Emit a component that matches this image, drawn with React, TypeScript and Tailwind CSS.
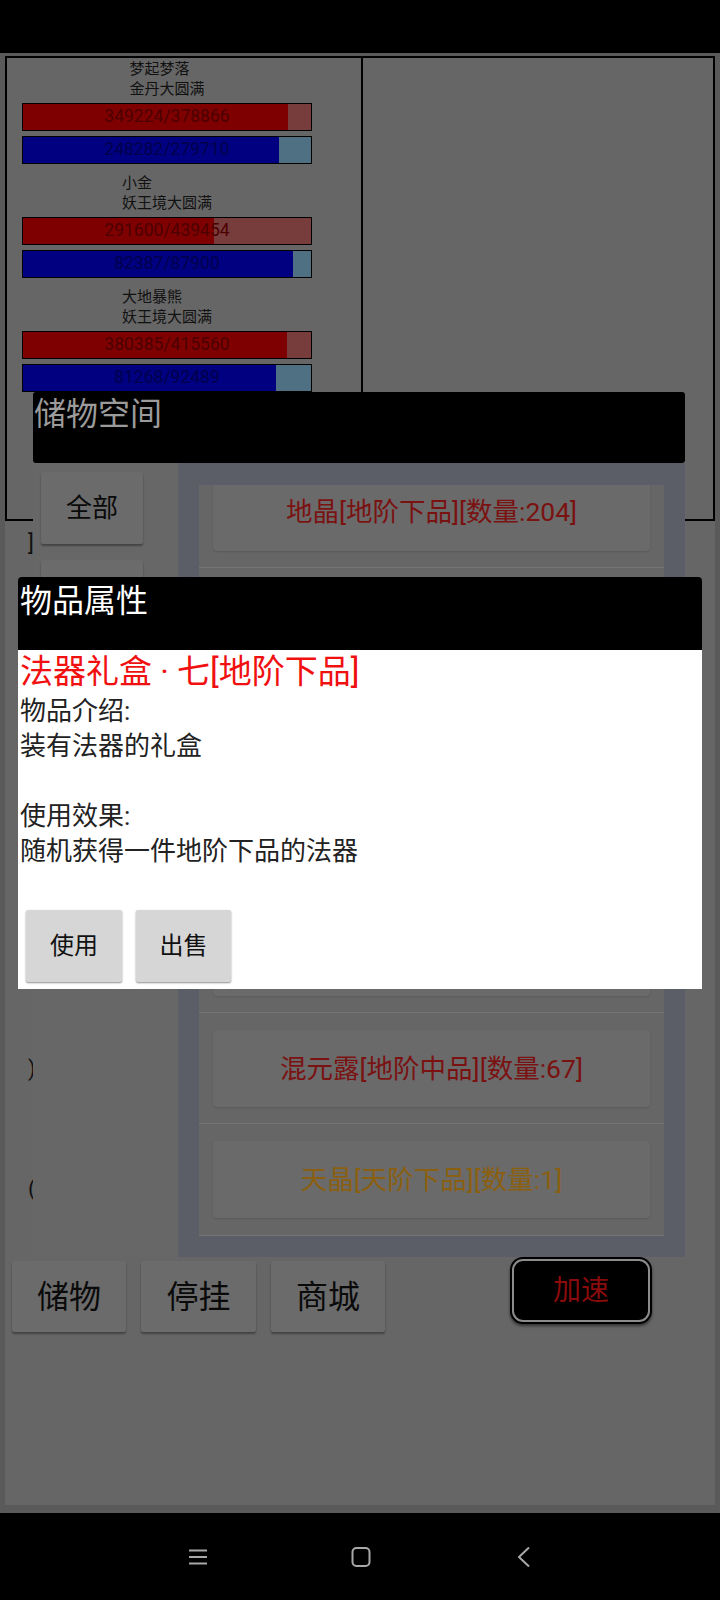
import React from "react";

const ff = "font-[family-name:Roboto,'Noto_Sans_CJK_SC',sans-serif]";

type Unit = { name: string; realm: string; hp: [number, number]; mp: [number, number] };

const units: Unit[] = [
  { name: "梦起梦落", realm: "金丹大圆满", hp: [349224, 378866], mp: [248282, 279710] },
  { name: "小金", realm: "妖王境大圆满", hp: [291600, 439454], mp: [82387, 87900] },
  { name: "大地暴熊", realm: "妖王境大圆满", hp: [380385, 415560], mp: [81268, 92489] },
];

function Bar({ v, kind }: { v: [number, number]; kind: "hp" | "mp" }) {
  const pct = (v[0] / v[1]) * 100;
  const isHp = kind === "hp";
  return (
    <div
      className={
        "relative h-[28px] border border-black " + (isHp ? "bg-[#773c3c]" : "bg-[#4f6f82]")
      }
    >
      <div
        className={"h-full " + (isHp ? "bg-[#7f0000]" : "bg-[#000080]")}
        style={{ width: pct + "%" }}
      />
      <div
        className={
          "absolute inset-0 flex items-center justify-center text-[17.5px] leading-none " +
          (isHp ? "text-[#4c0000]" : "text-[#00004c]")
        }
      >
        {v[0]}/{v[1]}
      </div>
    </div>
  );
}

function UnitBlock({ u }: { u: Unit }) {
  return (
    <div className="flex flex-col">
      <div className="self-center text-left text-[15px] leading-[20px] text-[#111]">
        <div>{u.name}</div>
        <div>{u.realm}</div>
      </div>
      <div className="mt-[4px]">
        <Bar v={u.hp} kind="hp" />
      </div>
      <div className="mt-[5px]">
        <Bar v={u.mp} kind="mp" />
      </div>
    </div>
  );
}

type Item = { text: string; gold?: boolean };
const items: Item[] = [
  { text: "地晶[地阶下品][数量:204]" },
  { text: "法器礼盒 · 七[地阶下品][数量:2]" },
  { text: "玄铁[地阶下品][数量:35]" },
  { text: "灵石[地阶下品][数量:88]" },
  { text: "聚灵丹[地阶中品][数量:12]" },
  { text: "混元露[地阶中品][数量:67]" },
  { text: "天晶[天阶下品][数量:1]", gold: true },
  { text: "龙血草[天阶下品][数量:3]", gold: true },
];

function GrayButton({ label, w, h, text }: { label: string; w: string; h: string; text: string }) {
  return (
    <div
      className={
        w +
        " " +
        h +
        " " +
        text +
        " flex items-center justify-center rounded-[2px] bg-[#6b6b6b] text-[#0a0a0a] leading-none shadow-[0_2px_2px_rgba(0,0,0,0.35)]"
      }
    >
      {label}
    </div>
  );
}

export default function App() {
  return (
    <div className={"w-[720px] h-[1600px] bg-black flex flex-col overflow-hidden " + ff}>
      {/* status bar */}
      <div className="h-[53px] shrink-0 bg-black" />

      {/* app area */}
      <div className="h-[1460px] shrink-0 bg-[#5a5a5a] pt-[3px] px-[5px] pb-[8px]">
        <div className="relative h-full bg-[#666666] flex flex-col">
          {/* top panels */}
          <div className="h-[465px] shrink-0 flex border-2 border-black">
            <div className="w-[356px] border-r-2 border-black pl-[15px] pt-[1px]">
              <div className="w-[290px] flex flex-col gap-[9px]">
                {units.map((u) => (
                  <UnitBlock key={u.name} u={u} />
                ))}
              </div>
            </div>
            <div className="flex-1" />
          </div>

          {/* background lower left fragments */}
          <div className="flex flex-col pl-[23px] text-[22px] leading-[24px] text-[#111]">
            <div className="mt-[11px]">]</div>
            <div className="mt-[501px]">)</div>
            <div className="mt-[96px]">(</div>
          </div>

          {/* bottom buttons */}
          <div className="mt-auto mb-[173px] flex items-start pl-[7px]">
            <div className="flex gap-[15px]">
              <GrayButton label="储物" w="w-[114px]" h="h-[71px]" text="text-[32px]" />
              <GrayButton label="停挂" w="w-[115px]" h="h-[71px]" text="text-[32px]" />
              <GrayButton label="商城" w="w-[114px]" h="h-[71px]" text="text-[32px]" />
            </div>
            <div className="ml-auto mr-[63px] -mt-[4px] w-[142px] h-[67px] rounded-[13px] bg-black p-[2px] shadow-[0_2px_3px_rgba(0,0,0,0.5)]">
              <div className="h-full rounded-[11px] border-2 border-[#8c8c8c] bg-black flex items-center justify-center text-[28px] leading-none text-[#8a0b0b]">
                加速
              </div>
            </div>
          </div>

          {/* storage dialog */}
          <div className="absolute left-[28px] top-[336px] w-[652px] flex flex-col">
            <div className="h-[71px] bg-black rounded-[3px] text-[32px] leading-[44px] text-[#9b9b9b] pl-[1px]">
              储物空间
            </div>
            <div className="h-[794px] flex">
              <div className="w-[145px] bg-[#676767] flex flex-col gap-[16px] pl-[8px] pt-[9px]">
                <GrayButton label="全部" w="w-[102px]" h="h-[72px]" text="text-[26px]" />
                <GrayButton label="装备" w="w-[102px]" h="h-[72px]" text="text-[26px]" />
              </div>
              <div className="flex-1 bg-[#5c5e67] pt-[22px] px-[21px] pb-[21px]">
                <div className="h-full overflow-hidden bg-[#666666]">
                  <div className="-mt-[28.3px] flex flex-col">
                    {items.map((it) => (
                      <div
                        key={it.text}
                        className="h-[111.3px] shrink-0 border-b border-[#747474] px-[14px] py-[17px]"
                      >
                        <div
                          className={
                            "h-[77px] rounded-[4px] bg-[#6a6a6a] shadow-[0_1px_2px_rgba(0,0,0,0.12)] flex items-center justify-center text-[26.5px] " +
                            (it.gold ? "text-[#8a5f10]" : "text-[#7a1212]")
                          }
                        >
                          {it.text}
                        </div>
                      </div>
                    ))}
                  </div>
                </div>
              </div>
            </div>
          </div>

          {/* item property dialog */}
          <div className="absolute left-[13px] top-[521px] w-[684px] flex flex-col">
            <div className="h-[73px] bg-black rounded-t-[4px] text-[32px] leading-[44px] text-white pl-[2px] pt-[2px]">
              物品属性
            </div>
            <div className="h-[339px] bg-white pl-[2px] flex flex-col">
              <div className="text-[33px] leading-[44px] text-[#f01010]">法器礼盒 · 七[地阶下品]</div>
              <div className="text-[26px] leading-[35px] text-[#222]">
                <div>物品介绍:</div>
                <div>装有法器的礼盒</div>
                <div className="h-[35px]" />
                <div>使用效果:</div>
                <div>随机获得一件地阶下品的法器</div>
              </div>
              <div className="mt-[41px] flex gap-[14px] pl-[6px]">
                <div className="w-[96px] h-[72px] rounded-[2px] bg-[#d6d6d6] shadow-[0_1px_2px_rgba(0,0,0,0.45)] flex items-center justify-center text-[24px] leading-none text-[#111]">
                  使用
                </div>
                <div className="w-[95px] h-[72px] rounded-[2px] bg-[#d6d6d6] shadow-[0_1px_2px_rgba(0,0,0,0.45)] flex items-center justify-center text-[24px] leading-none text-[#111]">
                  出售
                </div>
              </div>
            </div>
          </div>
        </div>
      </div>

      {/* navigation bar */}
      <div className="h-[87px] shrink-0 bg-black flex items-center justify-center gap-[143px] pl-[2px]">
        <svg width="20" height="20" viewBox="0 0 20 20" className="text-[#a8a8a8]">
          <path d="M1 3.5H19M1 10H19M1 16.5H19" stroke="currentColor" strokeWidth="2" fill="none" />
        </svg>
        <svg width="20" height="20" viewBox="0 0 20 20" className="text-[#a8a8a8]">
          <rect x="1.5" y="1" width="17" height="18" rx="4" stroke="currentColor" strokeWidth="2" fill="none" />
        </svg>
        <svg width="20" height="20" viewBox="0 0 20 20" className="text-[#a8a8a8]">
          <path d="M15 0.5L5 10L15 19.5" stroke="currentColor" strokeWidth="2" fill="none" strokeLinejoin="round" />
        </svg>
      </div>
    </div>
  );
}
